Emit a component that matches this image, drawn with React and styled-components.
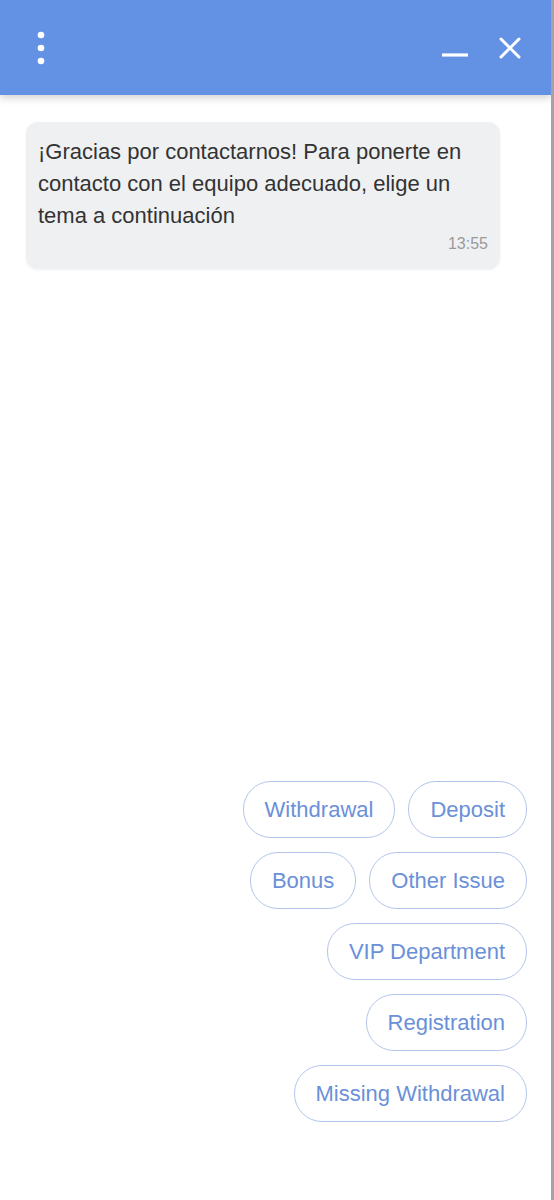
import React from 'react';
import styled, { createGlobalStyle } from 'styled-components';

const GlobalStyle = createGlobalStyle`
  html, body {
    margin: 0;
    padding: 0;
    background: #ffffff;
  }
  body {
    font-family: "Liberation Sans", Arial, sans-serif;
  }
`;

const Window = styled.div`
  width: 554px;
  height: 1200px;
  box-sizing: border-box;
  border-right: 3px solid #a3a3a3;
  display: flex;
  flex-direction: column;
  background: #ffffff;
  overflow: hidden;
`;

const Header = styled.header`
  height: 95px;
  flex: none;
  background: #6391e3;
  display: flex;
  align-items: center;
  justify-content: space-between;
  padding: 0 30px 0 34px;
  box-shadow: 0 3px 8px rgba(0, 0, 0, 0.18);
  position: relative;
  z-index: 1;
`;

const IconButton = styled.button`
  background: none;
  border: none;
  padding: 0;
  display: flex;
  align-items: center;
  justify-content: center;
  cursor: pointer;
`;

const Controls = styled.div`
  display: flex;
  align-items: center;
  gap: 30px;
`;

const Messages = styled.div`
  padding: 27px 0 0 26px;
`;

const Bubble = styled.div`
  width: 474px;
  box-sizing: border-box;
  background: #eff0f2;
  border-radius: 12px;
  padding: 14px 12px 14px 12px;
  box-shadow: 0 1px 3px rgba(0, 0, 0, 0.06);
`;

const BubbleText = styled.p`
  margin: 0;
  font-size: 22px;
  line-height: 32px;
  color: #333333;
`;

const Time = styled.div`
  text-align: right;
  font-size: 16px;
  line-height: 22px;
  margin-top: 1px;
  color: #9a9a9a;
`;

const Replies = styled.div`
  margin-top: auto;
  padding: 0 24px 78px 0;
  display: flex;
  flex-direction: column;
  align-items: flex-end;
  gap: 14px;
`;

const ReplyRow = styled.div`
  display: flex;
  gap: 13px;
`;

const Reply = styled.button`
  height: 57px;
  box-sizing: border-box;
  padding: 0 21px;
  border: 1px solid #b3c5eb;
  border-radius: 28px;
  background: #ffffff;
  color: #6a90d8;
  font-family: "Liberation Sans", Arial, sans-serif;
  font-size: 22px;
  cursor: pointer;
`;

const rows = [
  ['Withdrawal', 'Deposit'],
  ['Bonus', 'Other Issue'],
  ['VIP Department'],
  ['Registration'],
  ['Missing Withdrawal'],
];

const App = () => (
  <>
    <GlobalStyle />
    <Window>
      <Header>
        <IconButton aria-label="menu">
          <svg width="14" height="36" viewBox="0 0 14 36">
            <circle cx="7" cy="5" r="3.3" fill="#fff" />
            <circle cx="7" cy="18" r="3.3" fill="#fff" />
            <circle cx="7" cy="31" r="3.3" fill="#fff" />
          </svg>
        </IconButton>
        <Controls>
          <IconButton aria-label="minimize">
            <svg width="28" height="24" viewBox="0 0 28 24">
              <line x1="1" y1="19" x2="27" y2="19" stroke="#fff" strokeWidth="3.2" />
            </svg>
          </IconButton>
          <IconButton aria-label="close">
            <svg width="22" height="22" viewBox="0 0 22 22">
              <path d="M2 2L20 20M20 2L2 20" stroke="#fff" strokeWidth="3" strokeLinecap="round" />
            </svg>
          </IconButton>
        </Controls>
      </Header>
      <Messages>
        <Bubble>
          <BubbleText>
            ¡Gracias por contactarnos! Para ponerte en contacto con el equipo adecuado, elige un tema a continuación
          </BubbleText>
          <Time>13:55</Time>
        </Bubble>
      </Messages>
      <Replies>
        {rows.map((row, i) => (
          <ReplyRow key={i}>
            {row.map(label => (
              <Reply key={label}>{label}</Reply>
            ))}
          </ReplyRow>
        ))}
      </Replies>
    </Window>
  </>
);

export default App;
